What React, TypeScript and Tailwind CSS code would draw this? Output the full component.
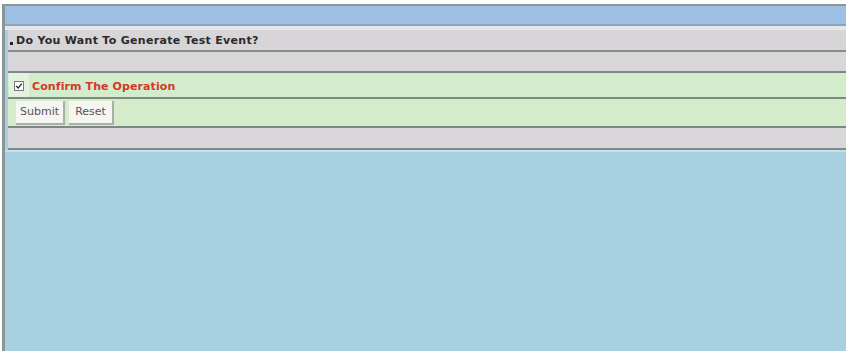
import React from "react";

export default function App() {
  const font = { fontFamily: '"DejaVu Sans", Verdana, sans-serif' };
  return (
    <div className="w-[848px] h-[354px] bg-white pt-[4px] pb-[3px] pl-[2px] pr-[2px]" style={font}>
      <div className="h-full flex flex-col bg-[#a7d1e0] border-l-[3px] border-t-2 border-[#8c9696]">
        <div className="h-[20px] bg-[#9dbfe6] border-b-2 border-[#8fa4b2] shrink-0" />
        <div className="h-[4px] bg-[#e3e6ea] shrink-0" />
        <div className="ml-[3px] flex flex-col shrink-0">
          <div className="h-[22px] bg-[#d8d5d8] border-b-2 border-[#858c8a] flex items-center pl-[2px] pt-[3px]">
            <span className="w-[3px] h-[3px] bg-[#222] mr-[3px] mt-[3px]" />
            <span className="text-[11px] font-bold text-[#2a2a2a] tracking-[0.3px]">Do You Want To Generate Test Event?</span>
          </div>
          <div className="h-[21px] bg-[#d9d6d9] border-b-2 border-[#7f8886]" />
          <div className="h-[26px] bg-[#d3eccb] border-b-2 border-[#7c8a80] flex items-center">
            <div className="h-full w-[20px] bg-[#e4f3df] flex items-center justify-center ml-[1px] pt-[2px]">
              <div className="w-[10px] h-[10px] bg-white border border-[#7a7a7a] flex items-center justify-center">
                <svg width="8" height="8" viewBox="0 0 8 8">
                  <path d="M1.2 4 L3.2 6 L6.8 1.6" stroke="#333" strokeWidth="1.4" fill="none" />
                </svg>
              </div>
            </div>
            <span className="ml-[3px] mt-[4px] text-[11px] font-bold text-[#d4372c] tracking-[0.1px]">Confirm The Operation</span>
          </div>
          <div className="h-[29px] bg-[#d4ecca] border-b-2 border-[#7d8886] flex items-center pl-[8px] gap-[4px]">
            <button className="h-[24px] w-[49px] bg-[#f5f5f1] border-r-2 border-b-2 border-[#a9aea8] text-[11px] text-[#555] flex items-center justify-center pt-[2px]">Submit</button>
            <button className="h-[24px] w-[45px] bg-[#f5f5f1] border-r-2 border-b-2 border-[#a9aea8] text-[11px] text-[#555] flex items-center justify-center pt-[2px]">Reset</button>
          </div>
          <div className="h-[22px] bg-[#d8d6d9] border-b-2 border-[#7f8a8c]" />
        </div>
        <div className="h-[2px] bg-[#c6e0ea] shrink-0" />
        <div className="flex-1" />
      </div>
    </div>
  );
}
